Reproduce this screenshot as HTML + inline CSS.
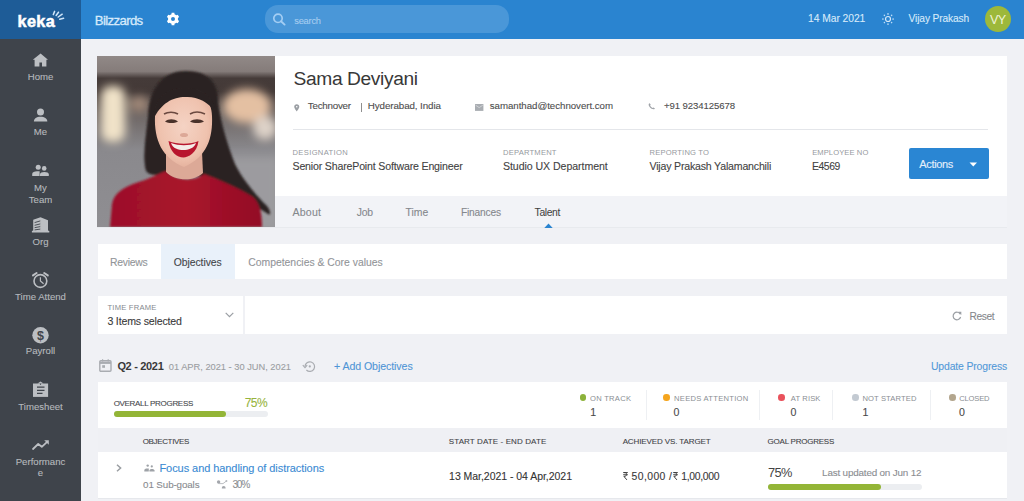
<!DOCTYPE html>
<html><head><meta charset="utf-8"><style>
html,body{margin:0;padding:0;}
body{width:1024px;height:501px;overflow:hidden;position:relative;background:#f0f1f5;font-family:"Liberation Sans", sans-serif;}
.b{position:absolute;}
.t{position:absolute;white-space:nowrap;line-height:1;}
svg.i{position:absolute;overflow:visible;}
</style></head><body>
<div class="b" style="left:0px;top:0px;width:81px;height:501px;background:#3f444b;"></div>
<div class="b" style="left:0px;top:0px;width:81px;height:39px;background:#1e5c97;"></div>
<div class="b" style="left:81px;top:0px;width:943px;height:39px;background:#2a84d0;"></div>
<div class="b" style="left:265px;top:5px;width:244px;height:28px;background:#4a97d8;border-radius:13px;"></div>
<div class="b" style="left:97px;top:56px;width:910px;height:140px;background:#ffffff;"></div>
<div class="b" style="left:97px;top:196px;width:910px;height:31px;background:#f2f3f7;"></div>
<div class="b" style="left:97px;top:227px;width:910px;height:1px;background:#e8eaee;"></div>
<div class="b" style="left:293px;top:129px;width:695px;height:1px;background:#e4e6ea;"></div>
<div class="b" style="left:361px;top:102.5px;width:1px;height:9px;background:#8f8f8f;"></div>
<div class="b" style="left:909px;top:148px;width:80px;height:31px;background:#2a86d3;border-radius:2px;"></div>
<div class="b" style="left:98px;top:244px;width:909px;height:35px;background:#ffffff;"></div>
<div class="b" style="left:161px;top:244px;width:74px;height:35px;background:#e9f1fa;"></div>
<div class="b" style="left:98px;top:296px;width:145px;height:38px;background:#ffffff;"></div>
<div class="b" style="left:245px;top:296px;width:762px;height:38px;background:#ffffff;"></div>
<div class="b" style="left:98px;top:382px;width:909px;height:46px;background:#ffffff;"></div>
<div class="b" style="left:114px;top:411px;width:154px;height:6px;background:#eceef1;border-radius:3px;"></div>
<div class="b" style="left:114px;top:411px;width:112px;height:6px;background:#93b537;border-radius:3px;"></div>
<div class="b" style="left:646px;top:390px;width:1px;height:30px;background:#eef0f3;"></div>
<div class="b" style="left:759px;top:390px;width:1px;height:30px;background:#eef0f3;"></div>
<div class="b" style="left:832px;top:390px;width:1px;height:30px;background:#eef0f3;"></div>
<div class="b" style="left:930px;top:390px;width:1px;height:30px;background:#eef0f3;"></div>
<div class="b" style="left:98px;top:428px;width:909px;height:24px;background:#eff0f4;"></div>
<div class="b" style="left:98px;top:452px;width:909px;height:46px;background:#ffffff;"></div>
<div class="b" style="left:98px;top:498px;width:909px;height:1px;background:#e6e8ec;"></div>
<div class="b" style="left:768px;top:484px;width:154px;height:6px;background:#eceef1;border-radius:3px;"></div>
<div class="b" style="left:768px;top:484px;width:113px;height:6px;background:#93b537;border-radius:3px;"></div>
<div class="b" style="left:985px;top:5.5px;width:26px;height:26px;background:#9db83a;border-radius:50%;"></div>
<div class="b" style="left:579.5px;top:394.3px;width:6.5px;height:6.5px;background:#8cb23a;border-radius:50%;"></div>
<div class="b" style="left:663px;top:394.3px;width:6.5px;height:6.5px;background:#f5a51e;border-radius:50%;"></div>
<div class="b" style="left:778px;top:394.3px;width:6.5px;height:6.5px;background:#e9525c;border-radius:50%;"></div>
<div class="b" style="left:852px;top:394.3px;width:6.5px;height:6.5px;background:#c3cad2;border-radius:50%;"></div>
<div class="b" style="left:949px;top:394.3px;width:6.5px;height:6.5px;background:#b3a68e;border-radius:50%;"></div>
<svg class="i" style="left:97px;top:56px;overflow:hidden" width="178" height="171" viewBox="0 0 178 171">
<defs>
<filter id="bl6" x="-50%" y="-50%" width="200%" height="200%"><feGaussianBlur stdDeviation="5"/></filter>
<filter id="bl2" x="-20%" y="-20%" width="140%" height="140%"><feGaussianBlur stdDeviation="1.1"/></filter>
<filter id="bl1" x="-20%" y="-20%" width="140%" height="140%"><feGaussianBlur stdDeviation="0.75"/></filter>
<linearGradient id="bgg" x1="0" y1="0" x2="0" y2="1">
<stop offset="0" stop-color="#918987"/><stop offset="0.09" stop-color="#857c7a"/><stop offset="0.13" stop-color="#453b39"/><stop offset="0.21" stop-color="#433937"/><stop offset="0.33" stop-color="#6c6462"/><stop offset="0.55" stop-color="#8a898d"/><stop offset="1" stop-color="#8f8e92"/></linearGradient>
<linearGradient id="sw" x1="0" y1="0" x2="1" y2="0">
<stop offset="0" stop-color="#9c1129"/><stop offset="0.5" stop-color="#a9132c"/><stop offset="1" stop-color="#930f25"/></linearGradient>
<radialGradient id="skin" cx="0.5" cy="0.45" r="0.6">
<stop offset="0" stop-color="#f5d3c4"/><stop offset="0.7" stop-color="#efc2ae"/><stop offset="1" stop-color="#e2ad99"/></radialGradient>
</defs>
<rect width="178" height="171" fill="url(#bgg)"/>
<g filter="url(#bl6)">
<rect x="4" y="30" width="24" height="56" rx="9" fill="#f0e2c8"/>
<ellipse cx="42" cy="48" rx="10" ry="8" fill="#a08878"/>
<ellipse cx="150" cy="50" rx="24" ry="17" fill="#e4c0a2"/>
<ellipse cx="168" cy="72" rx="12" ry="12" fill="#ddd2c8"/>
<rect x="125" y="100" width="58" height="76" fill="#9c9b9f"/>
</g>
<g filter="url(#bl2)">
<path d="M49 115 C45 100 49 80 51 60 C52 34 64 15 89 15 C112 15 122 28 121 46 C124 68 131 90 138 108 C146 124 158 138 170 150 C174 155 174 160 171 158 C160 151 150 146 140 142 C126 134 114 126 106 120 L66 118 C58 120 52 119 49 115 Z" fill="#2c2423"/>
<path d="M13 171 L15 148 C17 136 28 130 48 124 C56 121 63 117 69 115 C78 124 96 127 107 118 C118 122 138 130 156 141 C163 147 165 158 165 171 Z" fill="url(#sw)"/>
</g>
<g filter="url(#bl1)">
<path d="M69 96 L69 116 C78 125 96 126 106 117 L105 96 Z" fill="#dca997"/>
<path d="M58 60 C58 43 71 37 87 37 C103 37 115 43 115 60 C116 82 110 101 87 111 C65 102 57 84 58 60 Z" fill="url(#skin)"/>
<path d="M56 64 C57 40 71 32 88 32 C104 32 117 40 118 56 C111 45 99 40 88 41 C76 41 64 47 56 64 Z" fill="#2c2423"/>
<path d="M71.5 85 C80 88.5 94 88.5 101.5 85 C100 97 91 101.5 86.5 101.5 C80 101.5 73 96 71.5 85 Z" fill="#b8192f"/>
<path d="M74 87 C82 90 92 90 99 87 C97 92.5 91 94 86.5 94 C81 94 76 92.5 74 87 Z" fill="#f4ece8"/>
<path d="M67 58 C71 55.5 77 55.5 81 58" stroke="#6b4a40" stroke-width="1.5" fill="none"/>
<path d="M93 58 C97 55.5 103 55.5 108 58" stroke="#6b4a40" stroke-width="1.5" fill="none"/>
<path d="M68 65.5 C71.5 62.5 77 62.5 81 65.5 C77 67.5 72 67.5 68 65.5 Z" fill="#4a302a"/>
<path d="M93 65.5 C97 62.5 103 62.5 107 65.5 C103 67.5 97 67.5 93 65.5 Z" fill="#4a302a"/>
<ellipse cx="87" cy="79" rx="4" ry="2" fill="#dca897"/>
</g>
</svg>

<svg class="i" style="left:17px;top:9px" width="50" height="20" viewBox="0 0 50 20">
<text x="0.6" y="17.6" font-family="Liberation Sans" font-weight="700" font-size="16.3" fill="#ffffff" stroke="#ffffff" stroke-width="0.5" letter-spacing="0.3">keka</text>
<g stroke="#cfe5f9" stroke-width="1.5" stroke-linecap="round">
<path d="M36.3 5.6 L37.6 2.4"/><path d="M39.1 6.5 L41.5 3.2"/><path d="M41.2 8 L45.2 5.2"/><path d="M42.7 10.2 L46.6 9.3"/></g>
</svg>
<svg class="i" style="left:165.7px;top:12.3px" width="14" height="14" viewBox="0 0 14 14"><path fill-rule="evenodd" fill="#ffffff" d="M5.47 2.24 L5.62 0.75 L8.38 0.75 L8.53 2.24 L9.50 2.67 L10.36 3.30 L11.72 2.68 L13.10 5.07 L11.89 5.94 L12.00 7.00 L11.89 8.06 L13.10 8.93 L11.72 11.32 L10.36 10.70 L9.50 11.33 L8.53 11.76 L8.38 13.25 L5.62 13.25 L5.47 11.76 L4.50 11.33 L3.64 10.70 L2.28 11.32 L0.90 8.93 L2.11 8.06 L2.00 7.00 L2.11 5.94 L0.90 5.07 L2.28 2.68 L3.64 3.30 L4.50 2.67 Z M7 5 A2 2 0 1 0 7 9 A2 2 0 1 0 7 5 Z"/></svg>
<svg class="i" style="left:272px;top:12px" width="14" height="14" viewBox="0 0 14 14"><circle cx="6" cy="6.3" r="4.2" stroke="#a3cdf3" stroke-width="1.7" fill="none"/><path d="M9 9.3 L12.6 12.6" stroke="#a3cdf3" stroke-width="1.9" stroke-linecap="round"/></svg>
<svg class="i" style="left:881.75px;top:13px" width="12" height="12" viewBox="0 0 12 12"><circle cx="6" cy="6" r="2.5" stroke="#d5e9fa" stroke-width="1.2" fill="none"/><g fill="#b9daf6"><circle cx="6" cy="0.9" r="0.85"/><circle cx="6" cy="11.1" r="0.85"/><circle cx="0.9" cy="6" r="0.85"/><circle cx="11.1" cy="6" r="0.85"/><circle cx="2.4" cy="2.4" r="0.8"/><circle cx="9.6" cy="2.4" r="0.8"/><circle cx="2.4" cy="9.6" r="0.8"/><circle cx="9.6" cy="9.6" r="0.8"/></g></svg>
<!-- sidebar icons -->
<svg class="i" style="left:32px;top:52px" width="17" height="16" viewBox="0 0 17 16"><path fill="#bcbfc3" d="M8.6 1.4 L16 7.8 H14.4 V14.6 H10 V10.4 H7.4 V14.6 H2.6 V7.8 H0.8 Z"/></svg>
<svg class="i" style="left:32px;top:107px" width="17" height="16" viewBox="0 0 17 16"><circle cx="8.5" cy="5.1" r="3.5" fill="#bcbfc3"/><path fill="#bcbfc3" d="M1.9 14.6 C1.9 11.3 4.5 9.7 8.5 9.7 C12.5 9.7 15.3 11.3 15.3 14.6 Z"/></svg>
<svg class="i" style="left:32px;top:164px" width="17" height="13" viewBox="0 0 17 13"><circle cx="6.2" cy="3.2" r="2.5" fill="#bcbfc3"/><path fill="#bcbfc3" d="M0.2 12 V10 C0.2 8 2.5 7.2 5 7.2 H7.6 V12 Z"/><circle cx="12.2" cy="4.4" r="2.3" fill="#bcbfc3"/><path fill="#bcbfc3" d="M8 12 V10.3 C8 8.7 10 8 12.4 8 C14.8 8 16.8 8.7 16.8 10.3 V12 Z"/></svg>
<svg class="i" style="left:31px;top:216px" width="19" height="17" viewBox="0 0 19 17"><path fill="#bcbfc3" d="M2.2 3.8 L9.5 1.2 L17 4.3 V14.5 L18.3 15 V16.5 H0.9 V15 L2.2 14.5 Z"/><g stroke="#3f444b" stroke-width="0.9"><path d="M3.6 6.6 L9.3 4.9"/><path d="M3.6 9.3 L9.3 7.9"/><path d="M3.6 11.7 L9.3 10.6"/><path d="M3.6 13.9 L9.3 13.1"/></g><path d="M9.6 4 V14.5" stroke="#a9acb0" stroke-width="0.5"/></svg>
<svg class="i" style="left:31px;top:270px" width="19" height="20" viewBox="0 0 19 20"><circle cx="9.4" cy="11" r="6.4" stroke="#bcbfc3" stroke-width="1.6" fill="none"/><path d="M9.4 7.3 V11 L12.6 13.8" stroke="#bcbfc3" stroke-width="1.2" fill="none"/><path d="M2 5.4 L5.6 3 M13.2 3 L16.8 5.4" stroke="#bcbfc3" stroke-width="2" stroke-linecap="round"/></svg>
<svg class="i" style="left:32px;top:327px" width="17" height="17" viewBox="0 0 17 17"><circle cx="8.5" cy="8.2" r="8.2" fill="#bcbfc3"/><text x="8.5" y="12.6" text-anchor="middle" font-family="Liberation Sans" font-weight="700" font-size="12.5" fill="#3f444b">$</text></svg>
<svg class="i" style="left:32px;top:380px" width="17" height="18" viewBox="0 0 17 18"><rect x="1" y="3.5" width="15.1" height="13.4" fill="#bcbfc3"/><path d="M5.5 3.6 L8.5 1.6 L11.5 3.6 Z" fill="#bcbfc3"/><circle cx="8.5" cy="4.2" r="0.6" fill="#3f444b"/><g stroke="#3f444b" stroke-width="1.2"><path d="M5 7.1 H12.5 M5 10.3 H12.5 M5 13.4 H10.5"/></g></svg>
<svg class="i" style="left:32px;top:438px" width="18" height="13" viewBox="0 0 18 13"><path d="M1 11 L6.2 6 L9.8 8.8 L14.6 4.4" stroke="#bcbfc3" stroke-width="1.8" fill="none" stroke-linejoin="round" stroke-linecap="round"/><path d="M12.2 2.2 L16.8 2.2 L16.8 6.8 Z" fill="#bcbfc3"/></svg>
<!-- profile icons -->
<svg class="i" style="left:294px;top:103.5px" width="6" height="8" viewBox="0 0 6 8"><path fill-rule="evenodd" d="M2.75 0.2 C1.2 0.2 0.2 1.3 0.2 2.7 C0.2 4.2 2.75 7.4 2.75 7.4 C2.75 7.4 5.3 4.2 5.3 2.7 C5.3 1.3 4.3 0.2 2.75 0.2 Z M2.75 2 A0.8 0.8 0 1 0 2.75 3.6 A0.8 0.8 0 1 0 2.75 2 Z" fill="#9b9fa4"/></svg>
<svg class="i" style="left:474.5px;top:104px" width="9" height="7" viewBox="0 0 9 7"><rect x="0" y="0" width="8.4" height="6.9" fill="#a9adb2"/><path d="M0.6 1.2 L4.2 3.6 L7.8 1.2" stroke="#d8dadd" stroke-width="0.8" fill="none"/></svg>
<svg class="i" style="left:648px;top:102.5px" width="8" height="7" viewBox="0 0 8 7"><path d="M1.2 0.6 C0.4 1.2 0.4 2.6 1.6 4 C3 5.6 4.8 6.6 6.2 6.2 L7 5.5 L5.4 4.4 L4.6 5 C3.6 4.5 2.6 3.5 2.1 2.5 L2.7 1.8 L1.8 0.2 Z" fill="#9fa3a8"/></svg>
<svg class="i" style="left:968.5px;top:161.5px" width="9" height="5" viewBox="0 0 9 5"><path d="M0.5 0.5 H8 L4.25 4.5 Z" fill="#ffffff"/></svg>
<svg class="i" style="left:543.5px;top:222.5px" width="9" height="5" viewBox="0 0 9 5"><path d="M0.3 5 L4.5 0.5 L8.7 5 Z" fill="#2a84d0"/></svg>
<svg class="i" style="left:225px;top:312px" width="9" height="6" viewBox="0 0 9 6"><path d="M0.7 0.8 L4.5 4.6 L8.3 0.8" stroke="#9a9ea3" stroke-width="1.2" fill="none"/></svg>
<svg class="i" style="left:952px;top:311px" width="10" height="10" viewBox="0 0 10 10"><path d="M8.3 3.2 A3.8 3.8 0 1 0 8.6 6" stroke="#9a9ea3" stroke-width="1.2" fill="none"/><path d="M6.2 0.8 L9.3 0.8 L9.3 4 Z" fill="#9a9ea3"/></svg>
<svg class="i" style="left:99px;top:358.5px" width="13" height="13" viewBox="0 0 13 13"><rect x="0.8" y="1.8" width="11.2" height="10.4" rx="1" stroke="#a9acb1" stroke-width="1.4" fill="none"/><path d="M0.8 3.8H12" stroke="#a9acb1" stroke-width="2.2"/><path d="M3.6 0.2V2.4M9.2 0.2V2.4" stroke="#a9acb1" stroke-width="1.2"/><rect x="3.2" y="6.2" width="2.8" height="2.6" fill="#a9acb1"/></svg>
<svg class="i" style="left:302px;top:359.5px" width="14" height="13" viewBox="0 0 14 13"><path d="M3 6.4 A4.8 4.8 0 1 1 4.4 10" stroke="#a9acb1" stroke-width="1.2" fill="none"/><path d="M0.8 5.2 L3 7.6 L5.2 5.2" stroke="#a9acb1" stroke-width="1.2" fill="none"/><circle cx="7.8" cy="6.4" r="1.1" fill="#a9acb1"/></svg>
<svg class="i" style="left:116px;top:464px" width="6" height="8" viewBox="0 0 6 8"><path d="M1 0.8 L4.6 4 L1 7.2" stroke="#9a9ea2" stroke-width="1.5" fill="none"/></svg>
<svg class="i" style="left:144px;top:464px" width="11" height="8" viewBox="0 0 11 8"><circle cx="3.7" cy="1.6" r="1.2" fill="#9ea2a7"/><circle cx="7.8" cy="2.4" r="1.1" fill="#9ea2a7"/><path d="M0.3 7.6 V6.4 C0.3 5 1.5 4.4 3.2 4.4 C4.2 4.4 4.8 4.6 4.8 4.6 V7.6 Z M5.4 7.6 V6.6 C5.4 5.4 6.5 4.9 7.9 4.9 C9.3 4.9 10.6 5.4 10.6 6.6 V7.6 Z" fill="#9ea2a7"/></svg>
<svg class="i" style="left:216px;top:479px" width="12" height="10" viewBox="0 0 12 10"><circle cx="2.6" cy="3" r="1.7" fill="#a3a6ab"/><path d="M2.6 4.6 H7 L10.2 2.2" stroke="#b5b8bc" stroke-width="0.9" fill="none"/><circle cx="10.4" cy="2.1" r="1" fill="#b5b8bc"/><path d="M5.8 9.4 C5.8 7.6 6.6 6.9 7.7 6.9 C8.8 6.9 9.6 7.6 9.6 9.4 Z" fill="#a3a6ab"/></svg>
<svg class="i" style="left:623.3px;top:472.3px" width="5" height="8" viewBox="0 0 5 8"><path d="M0.2 0.55 H4.8 M0.2 2.75 H4.8 M0.9 0.55 C3.2 0.55 3.7 1.5 3.7 2.4 C3.7 3.7 2.6 4.4 0.9 4.4 L3.9 7.9" stroke="#3a3a3a" stroke-width="0.95" fill="none"/></svg>
<svg class="i" style="left:672.5px;top:472.3px" width="5" height="8" viewBox="0 0 5 8"><path d="M0.2 0.55 H4.8 M0.2 2.75 H4.8 M0.9 0.55 C3.2 0.55 3.7 1.5 3.7 2.4 C3.7 3.7 2.6 4.4 0.9 4.4 L3.9 7.9" stroke="#3a3a3a" stroke-width="0.95" fill="none"/></svg>

<div class="t" style="left:-59.5px;width:200px;text-align:center;top:72px;font-size:9.6px;color:#b6b9bd;-webkit-text-stroke:0.1px currentColor;">Home</div>
<div class="t" style="left:-59.5px;width:200px;text-align:center;top:127px;font-size:9.6px;color:#b6b9bd;-webkit-text-stroke:0.1px currentColor;">Me</div>
<div class="t" style="left:-59.5px;width:200px;text-align:center;top:183px;font-size:9.6px;color:#b6b9bd;-webkit-text-stroke:0.1px currentColor;">My</div>
<div class="t" style="left:-59.5px;width:200px;text-align:center;top:195px;font-size:9.6px;color:#b6b9bd;-webkit-text-stroke:0.1px currentColor;">Team</div>
<div class="t" style="left:-59.5px;width:200px;text-align:center;top:237px;font-size:9.6px;color:#b6b9bd;-webkit-text-stroke:0.1px currentColor;">Org</div>
<div class="t" style="left:-59.5px;width:200px;text-align:center;top:292px;font-size:9.6px;color:#b6b9bd;-webkit-text-stroke:0.1px currentColor;">Time Attend</div>
<div class="t" style="left:-59.5px;width:200px;text-align:center;top:346px;font-size:9.6px;color:#b6b9bd;-webkit-text-stroke:0.1px currentColor;">Payroll</div>
<div class="t" style="left:-59.5px;width:200px;text-align:center;top:402px;font-size:9.6px;color:#b6b9bd;-webkit-text-stroke:0.1px currentColor;">Timesheet</div>
<div class="t" style="left:-59.5px;width:200px;text-align:center;top:457px;font-size:9.6px;color:#b6b9bd;-webkit-text-stroke:0.1px currentColor;">Performanc</div>
<div class="t" style="left:-59.5px;width:200px;text-align:center;top:468px;font-size:9.6px;color:#b6b9bd;-webkit-text-stroke:0.1px currentColor;">e</div>
<div class="t" style="left:94.74px;top:14px;font-size:13.2px;color:#d6eafb;letter-spacing:-0.629px;-webkit-text-stroke:0.3px currentColor;">Bilzzards</div>
<div class="t" style="left:294.21px;top:17px;font-size:9.3px;color:#a6cdf0;letter-spacing:-0.224px;-webkit-text-stroke:0.1px currentColor;">search</div>
<div class="t" style="left:808.09px;top:14px;font-size:10.3px;color:#d8eafa;letter-spacing:-0.062px;-webkit-text-stroke:0.1px currentColor;">14 Mar 2021</div>
<div class="t" style="left:908.60px;top:14px;font-size:10.2px;color:#d8eafa;letter-spacing:-0.125px;-webkit-text-stroke:0.1px currentColor;">Vijay Prakash</div>
<div class="t" style="left:898px;width:200px;text-align:center;top:14px;font-size:12.6px;color:#eef3d6;letter-spacing:-0.6px;text-indent:-0.6px;">VY</div>
<div class="t" style="left:293.62px;top:69px;font-size:19.2px;color:#383838;letter-spacing:-0.389px;">Sama Deviyani</div>
<div class="t" style="left:307.80px;top:101px;font-size:9.8px;color:#4d4d4d;letter-spacing:-0.251px;-webkit-text-stroke:0.1px currentColor;">Technover</div>
<div class="t" style="left:367.80px;top:101px;font-size:9.8px;color:#4d4d4d;letter-spacing:-0.095px;-webkit-text-stroke:0.1px currentColor;">Hyderabad, India</div>
<div class="t" style="left:489.81px;top:101px;font-size:9.7px;color:#4d4d4d;letter-spacing:-0.035px;-webkit-text-stroke:0.1px currentColor;">samanthad@technovert.com</div>
<div class="t" style="left:664.01px;top:101px;font-size:9.6px;color:#4d4d4d;letter-spacing:-0.085px;-webkit-text-stroke:0.1px currentColor;">+91 9234125678</div>
<div class="t" style="left:292.55px;top:149px;font-size:7.6px;color:#96999e;letter-spacing:0.339px;">DESIGNATION</div>
<div class="t" style="left:503.05px;top:149px;font-size:7.6px;color:#96999e;letter-spacing:0.203px;">DEPARTMENT</div>
<div class="t" style="left:649.55px;top:149px;font-size:7.6px;color:#96999e;letter-spacing:0.178px;">REPORTING TO</div>
<div class="t" style="left:812.15px;top:149px;font-size:7.6px;color:#96999e;letter-spacing:0.087px;">EMPLOYEE NO</div>
<div class="t" style="left:292.49px;top:161px;font-size:10.6px;color:#424242;letter-spacing:-0.173px;-webkit-text-stroke:0.1px currentColor;">Senior SharePoint Software Engineer</div>
<div class="t" style="left:502.99px;top:161px;font-size:10.6px;color:#424242;letter-spacing:-0.063px;-webkit-text-stroke:0.1px currentColor;">Studio UX Department</div>
<div class="t" style="left:649.49px;top:161px;font-size:10.6px;color:#424242;letter-spacing:-0.192px;-webkit-text-stroke:0.1px currentColor;">Vijay Prakash Yalamanchili</div>
<div class="t" style="left:812.09px;top:162px;font-size:10.4px;color:#424242;letter-spacing:-0.460px;-webkit-text-stroke:0.1px currentColor;">E4569</div>
<div class="t" style="left:919.28px;top:159px;font-size:11px;color:#e6f0fb;letter-spacing:-0.343px;-webkit-text-stroke:0.1px currentColor;">Actions</div>
<div class="t" style="left:292.49px;top:207px;font-size:10.6px;color:#85888d;letter-spacing:0.206px;-webkit-text-stroke:0.1px currentColor;">About</div>
<div class="t" style="left:356.79px;top:208px;font-size:10.4px;color:#85888d;letter-spacing:-0.279px;-webkit-text-stroke:0.1px currentColor;">Job</div>
<div class="t" style="left:405.49px;top:208px;font-size:10.4px;color:#85888d;-webkit-text-stroke:0.1px currentColor;">Time</div>
<div class="t" style="left:461.00px;top:208px;font-size:10.2px;color:#85888d;letter-spacing:-0.191px;-webkit-text-stroke:0.1px currentColor;">Finances</div>
<div class="t" style="left:534.59px;top:208px;font-size:10.4px;color:#404040;letter-spacing:-0.385px;-webkit-text-stroke:0.1px currentColor;-webkit-text-stroke:0;">Talent</div>
<div class="t" style="left:110.09px;top:258px;font-size:10.4px;color:#929599;letter-spacing:-0.260px;-webkit-text-stroke:0.1px currentColor;">Reviews</div>
<div class="t" style="left:173.69px;top:258px;font-size:10.4px;color:#43464a;letter-spacing:-0.056px;-webkit-text-stroke:0.1px currentColor;">Objectives</div>
<div class="t" style="left:248.19px;top:258px;font-size:10.4px;color:#929599;-webkit-text-stroke:0.1px currentColor;">Competencies &amp; Core values</div>
<div class="t" style="left:107.45px;top:304px;font-size:7.6px;color:#85898e;letter-spacing:0.236px;">TIME FRAME</div>
<div class="t" style="left:107.39px;top:316px;font-size:10.6px;color:#3a3a3a;letter-spacing:-0.169px;-webkit-text-stroke:0.1px currentColor;">3 Items selected</div>
<div class="t" style="left:969.60px;top:312px;font-size:10.2px;color:#85888c;letter-spacing:-0.430px;-webkit-text-stroke:0.1px currentColor;">Reset</div>
<div class="t" style="left:117.38px;top:361px;font-size:11px;color:#393939;font-weight:700;letter-spacing:-0.313px;-webkit-text-stroke:0.1px currentColor;-webkit-text-stroke:0;">Q2 - 2021</div>
<div class="t" style="left:168.81px;top:363px;font-size:9.3px;color:#9b9ea2;letter-spacing:-0.012px;-webkit-text-stroke:0.1px currentColor;">01 APR, 2021 - 30 JUN, 2021</div>
<div class="t" style="left:334.09px;top:361px;font-size:10.6px;color:#4f95d6;letter-spacing:-0.079px;-webkit-text-stroke:0.1px currentColor;">+ Add Objectives</div>
<div class="t" style="left:930.99px;top:362px;font-size:10.4px;color:#5299d8;letter-spacing:-0.127px;-webkit-text-stroke:0.1px currentColor;">Update Progress</div>
<div class="t" style="left:113.64px;top:400px;font-size:8.0px;color:#45474b;letter-spacing:-0.302px;-webkit-text-stroke:0.1px currentColor;">OVERALL PROGRESS</div>
<div class="t" style="left:244.76px;top:397px;font-size:12px;color:#97b43d;letter-spacing:-0.596px;-webkit-text-stroke:0.1px currentColor;">75%</div>
<div class="t" style="left:590.05px;top:395px;font-size:7.6px;color:#8a8e93;letter-spacing:0.263px;">ON TRACK</div>
<div class="t" style="left:674.05px;top:395px;font-size:7.6px;color:#8a8e93;letter-spacing:0.280px;">NEEDS ATTENTION</div>
<div class="t" style="left:790.85px;top:395px;font-size:7.6px;color:#8a8e93;letter-spacing:0.118px;">AT RISK</div>
<div class="t" style="left:862.45px;top:395px;font-size:7.6px;color:#8a8e93;letter-spacing:0.120px;">NOT STARTED</div>
<div class="t" style="left:959.15px;top:395px;font-size:7.6px;color:#8a8e93;letter-spacing:-0.156px;">CLOSED</div>
<div class="t" style="left:590.19px;top:407px;font-size:10.6px;color:#4a4a4a;-webkit-text-stroke:0.1px currentColor;">1</div>
<div class="t" style="left:673.59px;top:407px;font-size:10.6px;color:#4a4a4a;-webkit-text-stroke:0.1px currentColor;">0</div>
<div class="t" style="left:790.39px;top:407px;font-size:10.6px;color:#4a4a4a;-webkit-text-stroke:0.1px currentColor;">0</div>
<div class="t" style="left:862.39px;top:407px;font-size:10.6px;color:#4a4a4a;-webkit-text-stroke:0.1px currentColor;">1</div>
<div class="t" style="left:959.09px;top:407px;font-size:10.6px;color:#4a4a4a;-webkit-text-stroke:0.1px currentColor;">0</div>
<div class="t" style="left:142.74px;top:438px;font-size:8.0px;color:#3f4347;letter-spacing:-0.360px;-webkit-text-stroke:0.1px currentColor;">OBJECTIVES</div>
<div class="t" style="left:448.84px;top:438px;font-size:8.0px;color:#3f4347;letter-spacing:0.109px;-webkit-text-stroke:0.1px currentColor;">START DATE - END DATE</div>
<div class="t" style="left:622.64px;top:438px;font-size:8.0px;color:#3f4347;letter-spacing:-0.105px;-webkit-text-stroke:0.1px currentColor;">ACHIEVED VS. TARGET</div>
<div class="t" style="left:767.54px;top:438px;font-size:8.0px;color:#3f4347;letter-spacing:-0.228px;-webkit-text-stroke:0.1px currentColor;">GOAL PROGRESS</div>
<div class="t" style="left:159.48px;top:463px;font-size:11px;color:#3a8ad3;letter-spacing:-0.067px;-webkit-text-stroke:0.1px currentColor;">Focus and handling of distractions</div>
<div class="t" style="left:143.10px;top:480px;font-size:9.8px;color:#888b8f;letter-spacing:-0.113px;-webkit-text-stroke:0.1px currentColor;">01 Sub-goals</div>
<div class="t" style="left:232.50px;top:480px;font-size:10.2px;color:#8d9094;letter-spacing:-1.293px;-webkit-text-stroke:0.1px currentColor;">30%</div>
<div class="t" style="left:449.09px;top:471px;font-size:10.5px;color:#333333;letter-spacing:-0.036px;-webkit-text-stroke:0.1px currentColor;">13 Mar,2021 - 04 Apr,2021</div>
<div class="t" style="left:631.49px;top:472px;font-size:10.4px;color:#383838;letter-spacing:0.421px;-webkit-text-stroke:0.1px currentColor;">50,000 /</div>
<div class="t" style="left:681.19px;top:472px;font-size:10.4px;color:#383838;letter-spacing:-0.306px;-webkit-text-stroke:0.1px currentColor;">1,00,000</div>
<div class="t" style="left:768.04px;top:467px;font-size:12.8px;color:#444444;letter-spacing:-0.634px;">75%</div>
<div class="t" style="left:822.10px;top:468px;font-size:9.9px;color:#8a8d91;letter-spacing:-0.183px;-webkit-text-stroke:0.1px currentColor;">Last updated on Jun 12</div>
</body></html>
